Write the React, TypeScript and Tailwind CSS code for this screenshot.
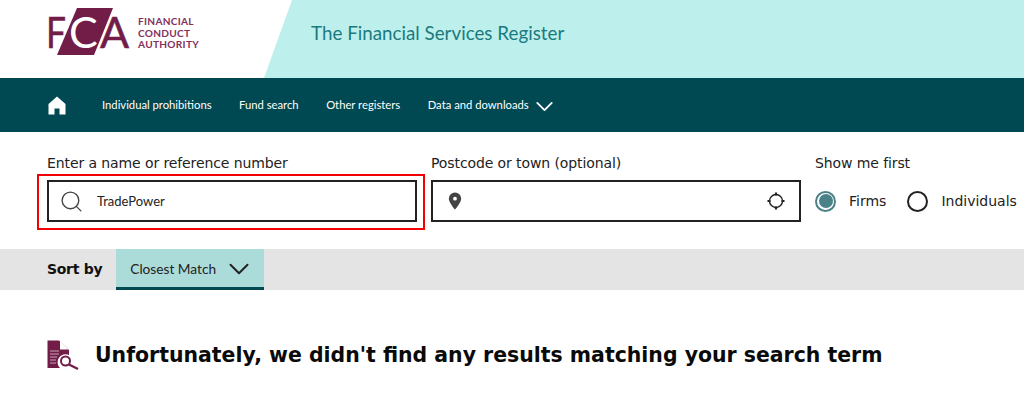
import { ChevronDown, Search } from "lucide-react";

const navLinks = ["Individual prohibitions", "Fund search", "Other registers"];

function FcaLogo() {
  return (
    <svg width="86" height="50" viewBox="0 0 86 50" className="shrink-0">
      <polygon points="30,1 66,1 47,48 10,48" fill="#711d47" />
      <text x="-1" y="41" fontFamily="Lato, sans-serif" fontSize="43" fill="#711d47" stroke="#711d47" strokeWidth="0.500" textLength="20" lengthAdjust="spacingAndGlyphs">F</text>
      <text x="22" y="41" fontFamily="Lato, sans-serif" fontSize="43" fill="#fff">C</text>
      <text x="53" y="41" fontFamily="Lato, sans-serif" fontSize="43" fill="#711d47" stroke="#711d47" strokeWidth="0.500">A</text>
    </svg>
  );
}

function HomeIcon() {
  return (
    <svg width="18" height="19" viewBox="0 0 18 19" fill="#fff">
      <path d="M9 0.5 L17.5 8 V18.5 H11.5 V12.5 H6.5 V18.5 H0.5 V8 Z" />
    </svg>
  );
}

function PinIcon() {
  return (
    <svg width="14" height="18" viewBox="0 0 14 18">
      <path
        fillRule="evenodd"
        fill="#444"
        d="M7 0.5a6.2 6.2 0 0 1 6.2 6.2C13.2 10.5 7 17.5 7 17.5S0.8 10.500 0.8 6.700A6.200 6.200 0 0 1 7 0.500zM7 4.800a1.900 1.900 0 1 0 0 3.800a1.900 1.900 0 0 0 0-3.800z"
      />
    </svg>
  );
}

function LocateIcon() {
  return (
    <svg width="18" height="18" viewBox="0 0 18 18" fill="none" stroke="#222">
      <circle cx="9" cy="9" r="6.500" strokeWidth="1.400" />
      <path d="M9 0.500V3.500M9 14.500V17.500M0.500 9H3.500M14.500 9H17.500" strokeWidth="2.200" />
    </svg>
  );
}

function NoResultsIcon() {
  return (
    <svg width="33" height="30" viewBox="0 0 33 30">
      <path d="M0.500 0.500H12L22 10V15a8 8 0 0 0-9 13H0.500Z" fill="#711d47" />
      <path d="M13 1V9.500H21.500" fill="#fff" />
      <path d="M3 11H12M3 14H12M3 17H10M3 20H9M3 23H9" stroke="#c9a3b6" strokeWidth="1" />
      <circle cx="18.500" cy="21" r="4.500" fill="#fff" stroke="#711d47" strokeWidth="2" />
      <path d="M22 24.500L31 29" stroke="#711d47" strokeWidth="2.200" />
    </svg>
  );
}

export default function App() {
  return (
    <div className="h-[405px] overflow-hidden bg-white font-['DejaVu_Sans',sans-serif] text-[#222]">
      <header className="flex h-[78px]">
        <div className="flex w-[264px] items-start gap-[5px] pl-[47px] pt-[7px]">
          <FcaLogo />
          <div className="mt-[9px] font-['Lato',sans-serif] text-[10.100px] font-bold leading-[11.500px] tracking-[0.3px] text-[#84305c]">
            FINANCIAL
            <br />
            CONDUCT
            <br />
            AUTHORITY
          </div>
        </div>
        <div className="flex flex-1 items-start bg-[#bdf0ec] pl-[47px] pt-[20px] [clip-path:polygon(28px_0,100%_0,100%_100%,0_100%)]">
          <h1 className="font-['Lato',sans-serif] text-[18.800px] leading-[26px] text-[#1b7a7e]">
            The Financial Services Register
          </h1>
        </div>
      </header>

      <nav className="flex h-[54px] items-center bg-[#004852] pl-[48px] font-['Lato',sans-serif] text-[11.250px] text-white">
        <HomeIcon />
        <div className="ml-[36px] flex items-center gap-[27.500px]">
          {navLinks.map((link) => (
            <a key={link} className="whitespace-nowrap">
              {link}
            </a>
          ))}
          <a className="flex items-center gap-[1px] whitespace-nowrap">
            Data and downloads
            <ChevronDown size={29} strokeWidth={1.500} className="mt-[2px]" />
          </a>
        </div>
      </nav>

      <section className="flex h-[117px] pl-[47px] pt-[22px]">
        <div className="w-[384px]">
          <label className="block text-[14px] leading-[18px] tracking-[-0.1px]">Enter a name or reference number</label>
          <div className="relative mt-[8px] flex h-[42px] w-[370px] items-center border-2 border-[#222] pl-[10px]">
            <Search size={25} strokeWidth={1.300} className="text-[#444]" />
            <span className="ml-[13px] mt-[1px] font-['Lato',sans-serif] text-[13px]">TradePower</span>
            <div className="absolute -bottom-[10px] -left-[12px] -right-[10px] -top-[8px] border-2 border-[#f40000]" />
          </div>
        </div>
        <div className="w-[384px]">
          <label className="block text-[14px] leading-[18px] tracking-[-0.1px]">Postcode or town (optional)</label>
          <div className="mt-[8px] flex h-[42px] w-[370px] items-center justify-between border-2 border-[#222] pl-[15px] pr-[14px]">
            <PinIcon />
            <LocateIcon />
          </div>
        </div>
        <div>
          <div className="text-[14px] leading-[18px] tracking-[-0.1px]">Show me first</div>
          <div className="mt-[8px] flex h-[42px] items-center text-[14px]">
            <span className="flex h-[21px] w-[21px] items-center justify-center rounded-full border-2 border-[#4b8288]">
              <span className="h-[14px] w-[14px] rounded-full bg-[#4b8288]" />
            </span>
            <span className="ml-[13px]">Firms</span>
            <span className="ml-[21px] h-[21px] w-[21px] rounded-full border-2 border-[#222]" />
            <span className="ml-[13px]">Individuals</span>
          </div>
        </div>
      </section>

      <div className="flex h-[41px] items-stretch bg-[#e4e4e4] pl-[47px]">
        <span className="self-center text-[14px] font-bold tracking-[-0.3px] text-[#111]">Sort by</span>
        <div className="ml-[14px] flex w-[148px] items-center gap-[6px] border-b-[3px] border-[#004852] bg-[#acdcd9] pl-[14px] font-['Lato',sans-serif] text-[13.700px]">
          <span className="mt-[3px]">Closest Match</span>
          <ChevronDown size={34} strokeWidth={1.400} className="mt-[1px]" />
        </div>
      </div>

      <div className="mt-[50px] flex items-center pl-[47px]">
        <NoResultsIcon />
        <h2 className="ml-[15px] whitespace-nowrap text-[20.450px] font-bold text-[#0a0a0a]">
          Unfortunately, we didn't find any results matching your search term
        </h2>
      </div>
    </div>
  );
}
